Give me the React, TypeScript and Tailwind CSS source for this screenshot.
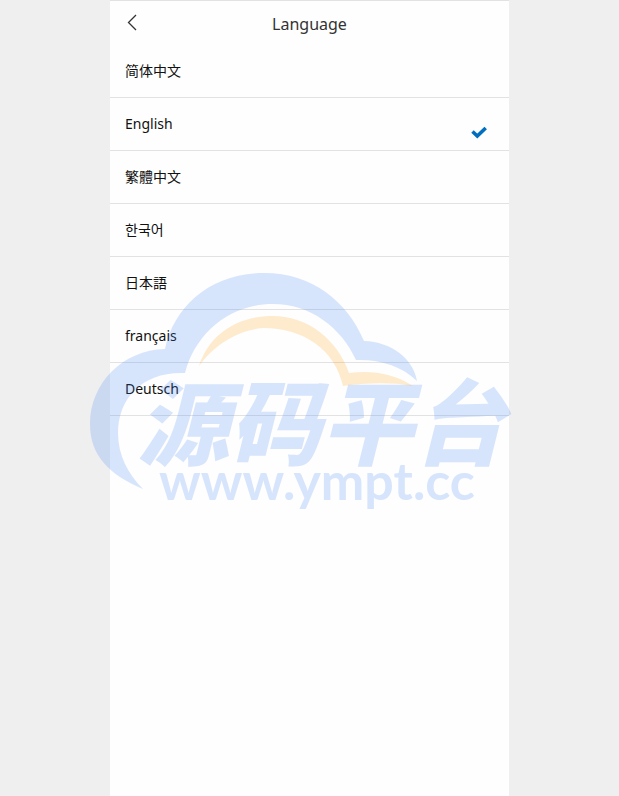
import { useState } from "react";

const languages = [
  { code: "zh-CN", name: "简体中文" },
  { code: "en", name: "English" },
  { code: "zh-TW", name: "繁體中文" },
  { code: "ko", name: "한국어" },
  { code: "ja", name: "日本語" },
  { code: "fr", name: "français" },
  { code: "de", name: "Deutsch" },
];

function Watermark() {
  return (
    <svg
      className="pointer-events-none absolute top-[270px] left-1/2 -ml-[220px]"
      width="430"
      height="250"
      viewBox="90 270 430 250"
      aria-hidden="true"
    >
      <g fill="#3b82f6" opacity="0.2">
        <path d="M143 489C110 475 90 456 90 424C90 383 123 350 165 349C174 306 211 273 264 273C312 273 347 301 364 341C391 342 413 358 417 381C402 366 379 359 356 360C341 327 310 304 273 304C229 304 195 334 185 373C144 371 118 397 118 433C118 455 128 474 143 489Z" />
        <text
          x="137"
          y="458"
          className="font-['Noto_Sans_CJK_SC',sans-serif] text-[92px] font-black italic"
        >
          源码平台
        </text>
        <text x="159" y="500" className="font-[Lato,sans-serif] text-[52px] font-bold">
          www.ympt.cc
        </text>
      </g>
      <path
        fill="#ffa00a"
        opacity="0.2"
        d="M199 366C209 335 236 316 273 316C309 316 338 341 349 373C373 370 395 374 413 386C390 382 367 383 343 386C335 350 304 328 263 328C237 330 213 346 199 366Z"
      />
    </svg>
  );
}

export default function App() {
  const [selected, setSelected] = useState("en");

  return (
    <div className="relative min-h-screen overflow-hidden bg-[#efefef] font-['Noto_Sans','Noto_Sans_CJK_SC','Noto_Sans_CJK_KR',sans-serif]">
      <main className="mx-auto min-h-screen w-full max-w-[399px] border-t border-[#e2e2e2] bg-[#fefefe]">
        <header className="grid h-11 grid-cols-[44px_1fr_44px] items-center">
          <button type="button" aria-label="Back" className="flex h-11 items-center justify-center">
            <svg width="10" height="18" viewBox="0 0 10 18" fill="none" stroke="#333" strokeWidth="1.3">
              <path d="M9 1L1.5 8.5L9 16" />
            </svg>
          </button>
          <h1 className="pt-0.5 text-center text-base text-[#333]">Language</h1>
        </header>
        <ul>
          {languages.map((language) => (
            <li key={language.code} className="border-b border-[#e2e2e2]">
              <button
                type="button"
                lang={language.code}
                aria-pressed={selected === language.code}
                onClick={() => setSelected(language.code)}
                className="flex h-13 w-full items-center justify-between pr-[22px] pl-[15px] text-left text-sm text-[#111]"
              >
                {language.name}
                {selected === language.code && (
                  <svg
                    className="mb-[11px] self-end"
                    width="16"
                    height="13"
                    viewBox="0 0 16 13"
                    fill="none"
                    stroke="#006fbf"
                    strokeWidth="3.6"
                  >
                    <path d="M1.5 5.5L6.3 10L14.7 2" />
                  </svg>
                )}
              </button>
            </li>
          ))}
        </ul>
      </main>
      <Watermark />
    </div>
  );
}
